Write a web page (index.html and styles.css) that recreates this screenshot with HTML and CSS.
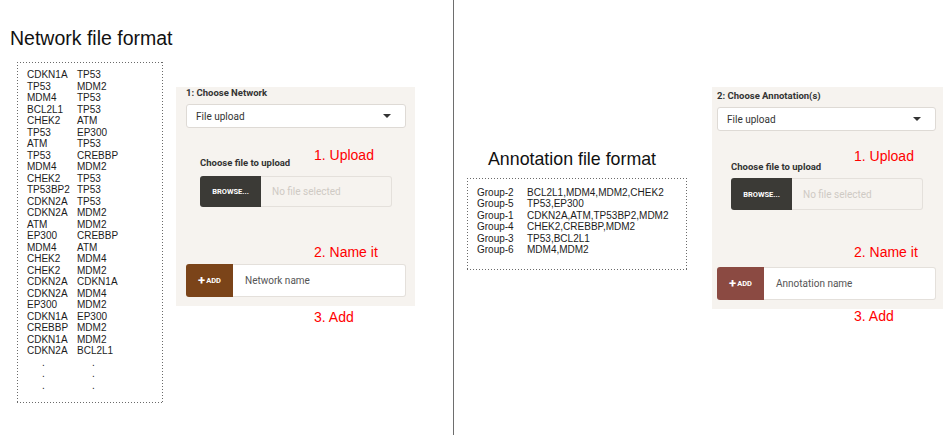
FILE: index.html
```html
<!DOCTYPE html>
<html>
<head>
<meta charset="utf-8">
<link rel="stylesheet" href="styles.css">
</head>
<body>
<div class="page">
  <section class="half half-left">
    <h1 class="title title-net">Network file format</h1>
    <div class="row row-net">
      <div class="dotbox netbox">
        <div class="pairs">
          <span>CDKN1A</span><span>TP53</span>
          <span>TP53</span><span>MDM2</span>
          <span>MDM4</span><span>TP53</span>
          <span>BCL2L1</span><span>TP53</span>
          <span>CHEK2</span><span>ATM</span>
          <span>TP53</span><span>EP300</span>
          <span>ATM</span><span>TP53</span>
          <span>TP53</span><span>CREBBP</span>
          <span>MDM4</span><span>MDM2</span>
          <span>CHEK2</span><span>TP53</span>
          <span>TP53BP2</span><span>TP53</span>
          <span>CDKN2A</span><span>TP53</span>
          <span>CDKN2A</span><span>MDM2</span>
          <span>ATM</span><span>MDM2</span>
          <span>EP300</span><span>CREBBP</span>
          <span>MDM4</span><span>ATM</span>
          <span>CHEK2</span><span>MDM4</span>
          <span>CHEK2</span><span>MDM2</span>
          <span>CDKN2A</span><span>CDKN1A</span>
          <span>CDKN2A</span><span>MDM4</span>
          <span>EP300</span><span>MDM2</span>
          <span>CDKN1A</span><span>EP300</span>
          <span>CREBBP</span><span>MDM2</span>
          <span>CDKN1A</span><span>MDM2</span>
          <span>CDKN2A</span><span>BCL2L1</span>
          <span class="dot">.</span><span class="dot">.</span>
          <span class="dot">.</span><span class="dot">.</span>
          <span class="dot">.</span><span class="dot">.</span>
        </div>
      </div>
      <div class="panel panel-net">
        <div class="plabel">1: Choose Network</div>
        <div class="select"><span>File upload</span><span class="caret"></span></div>
        <div class="filesec">
          <div class="flabel">Choose file to upload</div>
          <div class="filegroup">
            <div class="browse">BROWSE...</div>
            <div class="fname">No file selected</div>
          </div>
        </div>
        <div class="addgroup">
          <div class="addbtn add-net"><span class="plus">+</span>ADD</div>
          <div class="addinput">Network name</div>
        </div>
        <div class="note n1">1. Upload</div>
        <div class="note n2">2. Name it</div>
        <div class="note n3">3. Add</div>
      </div>
    </div>
  </section>
  <div class="divider"></div>
  <section class="half half-right">
    <div class="annot">
      <h2 class="title title-ann">Annotation file format</h2>
      <div class="dotbox annbox">
        <div class="groups">
          <span>Group-2</span><span>BCL2L1,MDM4,MDM2,CHEK2</span>
          <span>Group-5</span><span>TP53,EP300</span>
          <span>Group-1</span><span>CDKN2A,ATM,TP53BP2,MDM2</span>
          <span>Group-4</span><span>CHEK2,CREBBP,MDM2</span>
          <span>Group-3</span><span>TP53,BCL2L1</span>
          <span>Group-6</span><span>MDM4,MDM2</span>
        </div>
      </div>
    </div>
    <div class="panel panel-ann">
      <div class="plabel">2: Choose Annotation(s)</div>
      <div class="select"><span>File upload</span><span class="caret"></span></div>
      <div class="filesec">
        <div class="flabel">Choose file to upload</div>
        <div class="filegroup">
          <div class="browse">BROWSE...</div>
          <div class="fname">No file selected</div>
        </div>
      </div>
      <div class="addgroup">
        <div class="addbtn add-ann"><span class="plus">+</span>ADD</div>
        <div class="addinput">Annotation name</div>
      </div>
      <div class="note n1">1. Upload</div>
      <div class="note n2">2. Name it</div>
      <div class="note n3">3. Add</div>
    </div>
  </section>
</div>
</body>
</html>
```
FILE: styles.css
```css
* { box-sizing: border-box; }
html, body { margin: 0; padding: 0; background: #fff; }
body { font-family: "Liberation Sans", Arial, sans-serif; color: #1a1a1a; }

.page { display: flex; width: 945px; height: 436px; }

.half-left { width: 453px; flex: none; padding: 27px 0 0 10px; }
.divider { width: 1px; flex: none; background: #6e6e6e; height: 435px; }
.half-right { flex: 1; display: flex; align-items: flex-start; padding-left: 13px; }

.title { margin: 0; font-weight: normal; color: #111; }
.title-net { font-size: 19.5px; line-height: 22px; }
.title-ann { font-size: 17.8px; line-height: 21px; margin-left: 21px; }

.row-net { display: flex; align-items: flex-start; margin-top: 13px; margin-left: 7px; }

.dotbox {
  background:
    repeating-linear-gradient(90deg, #6a6a6a 0 1px, transparent 1px 3px) left top / 100% 1px no-repeat,
    repeating-linear-gradient(90deg, #6a6a6a 0 1px, transparent 1px 3px) left bottom / 100% 1px no-repeat,
    repeating-linear-gradient(180deg, #6a6a6a 0 1px, transparent 1px 3px) left top / 1px 100% no-repeat,
    repeating-linear-gradient(180deg, #6a6a6a 0 1px, transparent 1px 3px) right top / 1px 100% no-repeat;
}
.netbox { width: 146px; height: 341px; padding: 7px 0 0 10px; flex: none; }
.pairs { display: grid; grid-template-columns: 50px auto; font-size: 10px; line-height: 11.5px; color: #1c1c1c; }
.pairs .dot { padding-left: 15px; }

.annot { margin-top: 149px; flex: none; }
.annbox { width: 220px; height: 92px; margin-top: 8px; padding: 9px 0 0 10px; }
.groups { display: grid; grid-template-columns: 50px auto; font-size: 10px; line-height: 11.4px; color: #1c1c1c; }

.panel { position: relative; background: #f6f3ef; font-family: Roboto, "Liberation Sans", sans-serif; flex: none; }
.panel-net { width: 239px; margin-top: 25px; margin-left: 13px; padding: 0 9px 9px 10px; }
.panel-ann { width: 231px; margin-top: 87px; margin-left: 25px; padding: 3px 7px 9px 5px; }

.plabel { font-size: 9.5px; font-weight: bold; line-height: 12px; color: #333; }
.select { display: flex; align-items: center; justify-content: space-between; height: 24px; margin-top: 5px; background: #fff; border: 1px solid #dedad5; border-radius: 3px; padding: 0 14px 0 9px; font-size: 10px; color: #333; }
.caret { width: 0; height: 0; border-left: 4px solid transparent; border-right: 4px solid transparent; border-top: 4px solid #333; }

.filesec { padding-left: 14px; margin-top: 29px; }
.panel-ann .filesec { margin-top: 30px; }
.flabel { font-size: 9.5px; font-weight: bold; line-height: 12px; color: #333; }
.filegroup { display: flex; width: 192px; height: 31px; margin-top: 7px; }
.panel-ann .filegroup { height: 32px; margin-top: 5px; }
.browse { width: 61px; flex: none; background: #3b3a36; color: #fff; font-size: 7.5px; font-weight: bold; display: flex; align-items: center; justify-content: center; border-radius: 3px 0 0 3px; }
.fname { flex: 1; border: 1px solid #e4e0db; border-left: none; border-radius: 0 3px 3px 0; background: #f6f3ef; color: #cfcac4; font-size: 10px; display: flex; align-items: center; padding-left: 11px; }

.addgroup { display: flex; height: 33px; margin-top: 57px; }
.addbtn { width: 47px; flex: none; color: #fff; font-size: 7.5px; font-weight: bold; display: flex; align-items: center; justify-content: center; border-radius: 3px 0 0 3px; }
.plus { font-size: 13px; margin-right: 1px; line-height: 1; }
.add-net { background: #7b4419; }
.add-ann { background: #8b4a42; }
.addinput { flex: 1; background: #fff; border: 1px solid #e4e0db; border-left: none; border-radius: 0 3px 3px 0; font-size: 10px; color: #555; display: flex; align-items: center; padding-left: 12px; }

.note { position: absolute; font-family: "Liberation Sans", Arial, sans-serif; font-size: 14px; line-height: 16px; color: #f00; white-space: nowrap; }
.panel-net .n1 { left: 138px; top: 60px; }
.panel-net .n2 { left: 138px; top: 157px; }
.panel-net .n3 { left: 138px; top: 222px; }
.panel-ann .n1 { left: 142px; top: 61px; }
.panel-ann .n2 { left: 142px; top: 157px; }
.panel-ann .n3 { left: 142px; top: 221px; }
```
